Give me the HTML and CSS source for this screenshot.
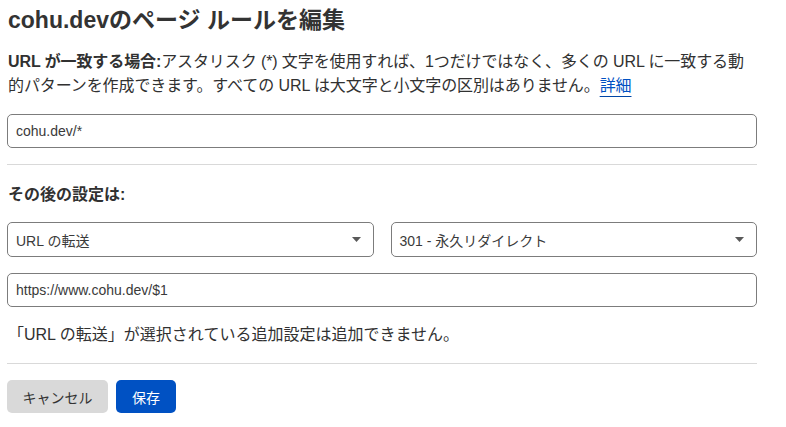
FILE: index.html
```html
<!DOCTYPE html>
<html lang="ja">
<head>
<meta charset="utf-8">
<link rel="stylesheet" href="styles.css">
</head>
<body>
<div class="page">
  <h1 class="title">cohu.devのページ ルールを編集</h1>
  <p class="desc"><strong>URL が一致する場合:</strong>アスタリスク (*) 文字を使用すれば、1つだけではなく、多くの URL に一致する動的パターンを作成できます。すべての URL は大文字と小文字の区別はありません。<a class="link" href="#">詳細</a></p>
  <div class="field">cohu.dev/*</div>
  <div class="rule"></div>
  <h2 class="subtitle">その後の設定は:</h2>
  <div class="row">
    <div class="select"><span>URL の転送</span><svg class="caret" width="9" height="5" viewBox="0 0 9 5"><path d="M0 0H9L4.5 5Z" fill="#595959"/></svg></div>
    <div class="select"><span>301 - 永久リダイレクト</span><svg class="caret" width="9" height="5" viewBox="0 0 9 5"><path d="M0 0H9L4.5 5Z" fill="#595959"/></svg></div>
  </div>
  <div class="field field-second">https://www.cohu.dev/$1</div>
  <p class="note">「URL の転送」が選択されている追加設定は追加できません。</p>
  <div class="rule rule-bottom"></div>
  <div class="actions">
    <button class="btn btn-cancel">キャンセル</button>
    <button class="btn btn-save">保存</button>
  </div>
</div>
</body>
</html>
```

FILE: styles.css
```css
* { box-sizing: border-box; }
html, body { margin: 0; padding: 0; background: #ffffff; }
body {
  font-family: "Liberation Sans", "Noto Sans CJK JP", sans-serif;
  color: #313131;
}
.page {
  width: 750px;
  margin-left: 7px;
  padding-top: 4px;
}
.title {
  margin: 0 0 0 1px;
  font-size: 23px;
  line-height: 32px;
  font-weight: 600;
  color: #333333;
}
.desc {
  margin: 14px 0 0 1px;
  font-size: 16px;
  line-height: 24px;
  width: 745px;
  letter-spacing: -0.1px;
}
.desc strong { font-weight: 700; }
.link {
  color: #0051c3;
  text-decoration: underline;
  text-decoration-color: #0045a6;
  text-underline-offset: 5px;
}
.field {
  margin-top: 16px;
  height: 34px;
  border: 1px solid #7c7c7c;
  border-radius: 5px;
  padding: 0 8px;
  display: flex;
  align-items: center;
  font-size: 14px;
  color: #3a3a3a;
}
.field-second { margin-top: 16px; }
.rule {
  margin-top: 16px;
  height: 1px;
  background: #d9d9d9;
}
.subtitle {
  margin: 18px 0 0 1px;
  font-size: 16px;
  line-height: 24px;
  font-weight: 700;
}
.row {
  margin-top: 15px;
  display: flex;
  gap: 17px;
}
.select {
  flex: 1;
  height: 35px;
  border: 1px solid #7c7c7c;
  border-radius: 5px;
  padding: 0 12px 0 8px;
  display: flex;
  align-items: center;
  justify-content: space-between;
  font-size: 14px;
  color: #3a3a3a;
}
.caret { display: block; }
.note {
  margin: 16px 0 0 1px;
  font-size: 16px;
  line-height: 24px;
}
.rule-bottom { margin-top: 16px; }
.actions {
  margin-top: 16px;
  display: flex;
  gap: 8px;
}
.btn {
  height: 33px;
  border: none;
  border-radius: 5px;
  font-family: "Liberation Sans", "Noto Sans CJK JP", sans-serif;
  font-size: 14px;
  padding: 0;
  white-space: nowrap;
}
.btn-cancel { background: #d9d9d9; color: #333333; width: 101px; }
.btn-save { background: #0051c3; color: #ffffff; width: 60px; }
```
